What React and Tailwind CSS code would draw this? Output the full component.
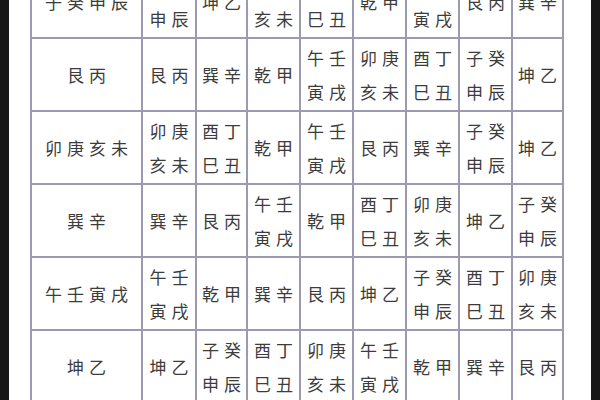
const rows = [
  ["子癸申辰", ["子癸", "申辰"], "坤乙", ["卯庚", "亥未"], ["酉丁", "巳丑"], "乾甲", ["午壬", "寅戌"], "艮丙", "巽辛"],
  ["艮丙", "艮丙", "巽辛", "乾甲", ["午壬", "寅戌"], ["卯庚", "亥未"], ["酉丁", "巳丑"], ["子癸", "申辰"], "坤乙"],
  ["卯庚亥未", ["卯庚", "亥未"], ["酉丁", "巳丑"], "乾甲", ["午壬", "寅戌"], "艮丙", "巽辛", ["子癸", "申辰"], "坤乙"],
  ["巽辛", "巽辛", "艮丙", ["午壬", "寅戌"], "乾甲", ["酉丁", "巳丑"], ["卯庚", "亥未"], "坤乙", ["子癸", "申辰"]],
  ["午壬寅戌", ["午壬", "寅戌"], "乾甲", "巽辛", "艮丙", "坤乙", ["子癸", "申辰"], ["酉丁", "巳丑"], ["卯庚", "亥未"]],
  ["坤乙", "坤乙", ["子癸", "申辰"], ["酉丁", "巳丑"], ["卯庚", "亥未"], ["午壬", "寅戌"], "乾甲", "巽辛", "艮丙"],
];

function Cell({ value }) {
  const lines = Array.isArray(value) ? value : [value];
  return (
    <div className="flex h-[71px] flex-col items-center justify-center bg-white">
      {lines.map((line, i) => (
        <span key={i} className="whitespace-nowrap pl-[5px] leading-[34px] tracking-[5px]">
          {line}
        </span>
      ))}
    </div>
  );
}

export default function App() {
  return (
    <div
      className="flex h-[400px] w-[600px] overflow-hidden bg-[#161616] text-[17px] text-[#3c3c3c]"
      style={{ fontFamily: '"Noto Sans CJK SC", "Noto Sans", sans-serif' }}
    >
      <div className="ml-[9px] mr-[9px] flex-1 bg-white pl-[21px]">
        {/* table */}
        <div className="-mt-[36px] grid w-[534px] grid-cols-[109px_52px_49px_51px_51px_51px_51px_51px_49px] gap-[2px] bg-[#9c9ab2] p-[2px]">
          {rows.map((row, r) =>
            row.map((value, c) => <Cell key={`${r}-${c}`} value={value} />)
          )}
        </div>
      </div>
    </div>
  );
}
